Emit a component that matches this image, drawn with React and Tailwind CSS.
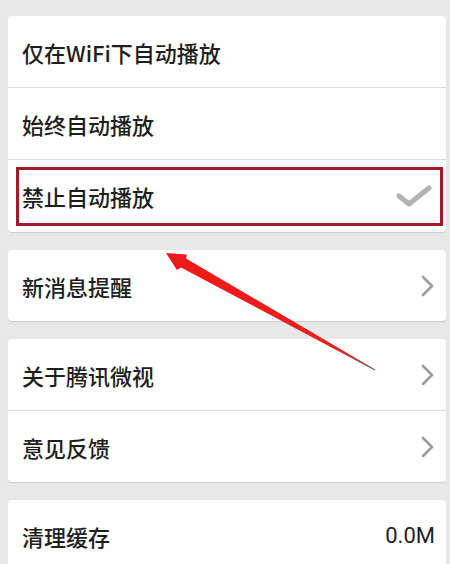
import React from "react";

const font = { fontFamily: '"Noto Sans CJK SC", "Noto Sans", sans-serif' };

function Chevron() {
  return (
    <svg width="14" height="22" viewBox="0 0 14 22" className="shrink-0">
      <polyline points="2,2 11,11 2,20" fill="none" stroke="#9c9c9c" strokeWidth="2.6" strokeLinecap="round" strokeLinejoin="round" />
    </svg>
  );
}

function Check() {
  return (
    <svg width="36" height="22" viewBox="0 0 36 22" className="shrink-0">
      <polyline points="3,11 13,19 33,3" fill="none" stroke="#b2b2b2" strokeWidth="5" strokeLinecap="round" strokeLinejoin="round" />
    </svg>
  );
}

function Row({ label, right, border, h = "h-[72px]" }) {
  return (
    <div className={`flex items-center justify-between pl-[14px] pr-[11px] ${h} ${border ? "border-b border-[#dcdcdc]" : ""}`}>
      <span className="text-[22px] font-medium leading-none text-[#1e1e1e]">{label}</span>
      {right}
    </div>
  );
}

export default function App() {
  return (
    <div className="relative h-[564px] w-[450px] overflow-hidden bg-[#e8e8e8] pt-4" style={font}>
      <div className="ml-2 mr-1 flex flex-col gap-[18px]">
        <div className="overflow-hidden rounded-[4px] bg-white shadow-[0_1px_1px_rgba(0,0,0,0.12)]">
          <Row label="仅在WiFi下自动播放" border />
          <Row label="始终自动播放" border />
          <div className="relative flex h-[72px] items-center justify-between pl-[14px] pr-[14px]">
            <span className="text-[22px] font-medium leading-none text-[#1e1e1e]">禁止自动播放</span>
            <Check />
            <div className="absolute left-2 right-[3px] top-[7px] bottom-[6px] border-[3px] border-[#a21b26]" />
          </div>
        </div>
        <div className="overflow-hidden rounded-[4px] bg-white shadow-[0_1px_1px_rgba(0,0,0,0.12)]">
          <Row label="新消息提醒" right={<Chevron />} h="h-[71px]" />
        </div>
        <div className="overflow-hidden rounded-[4px] bg-white shadow-[0_1px_1px_rgba(0,0,0,0.12)]">
          <Row label="关于腾讯微视" right={<Chevron />} border />
          <Row label="意见反馈" right={<Chevron />} h="h-[71px]" />
        </div>
        <div className="overflow-hidden rounded-[4px] bg-white">
          <div className="flex h-[72px] items-center justify-between pl-[14px] pr-[11px]">
            <span className="text-[22px] font-medium leading-none text-[#1e1e1e]">清理缓存</span>
            <span className="text-[22px] leading-none text-[#1e1e1e]" style={{ fontFamily: '"Roboto", "Noto Sans", sans-serif' }}>0.0M</span>
          </div>
        </div>
      </div>
      <svg className="pointer-events-none absolute left-0 top-0" width="450" height="564" viewBox="0 0 450 564">
        <defs>
          <linearGradient id="ag" x1="166" y1="253" x2="376" y2="370" gradientUnits="userSpaceOnUse">
            <stop offset="0" stopColor="#f01818" />
            <stop offset="0.8" stopColor="#e82020" />
            <stop offset="1" stopColor="#7a5a5a" />
          </linearGradient>
        </defs>
        <polygon
          points="166,253 187,254.5 186,258.5 375.3,369.5 374.8,370.5 181,267.5 177,270"
          fill="url(#ag)"
        />
      </svg>
    </div>
  );
}
